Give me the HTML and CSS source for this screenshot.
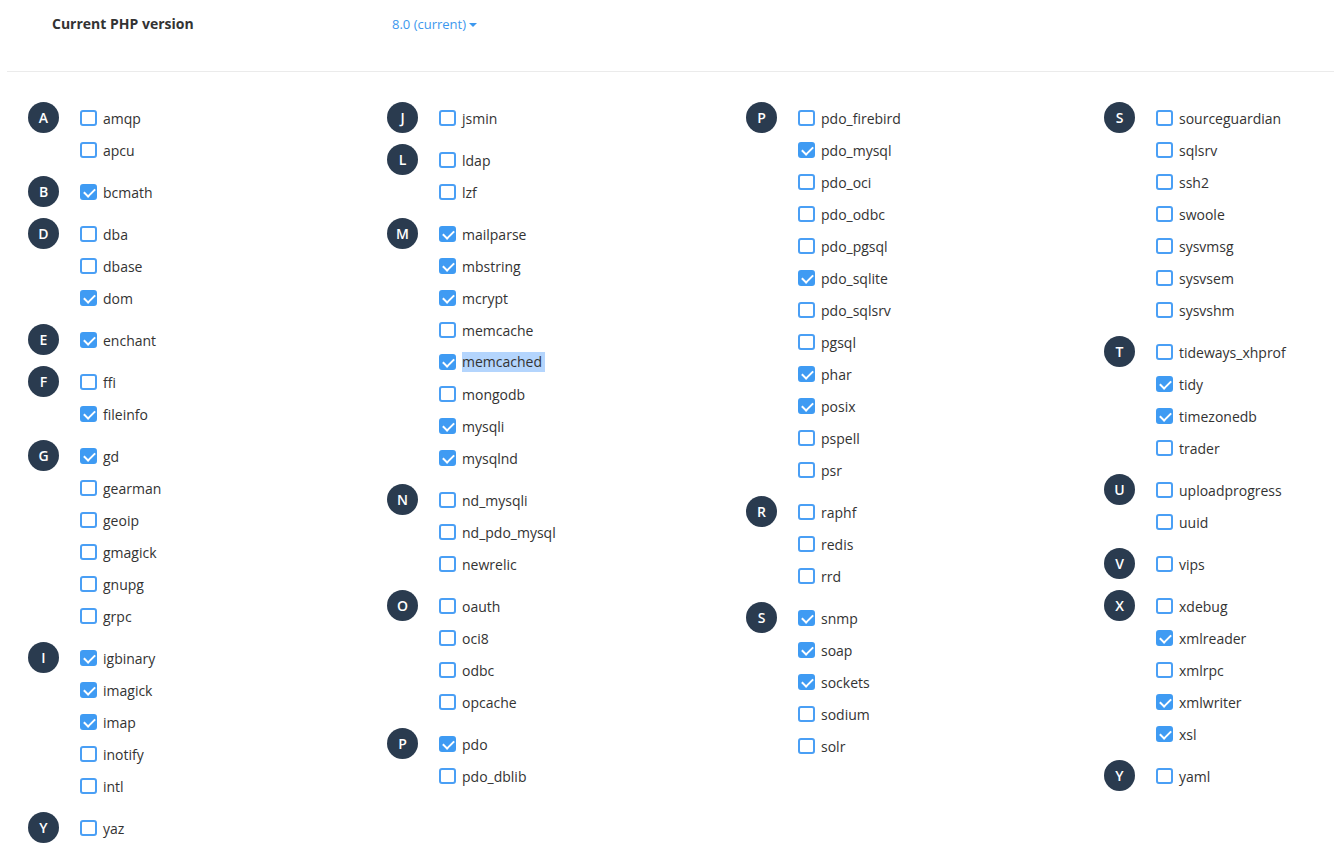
FILE: index.html
```html
<!DOCTYPE html>
<html>
<head>
<meta name="viewport" content="width=device-width, initial-scale=1">
<link rel="stylesheet" href="styles.css">
</head>
<body>

<div class="topbar">
  <span class="topLabel">Current PHP version</span>
  <span class="version">8.0 (current)<span class="caret"></span></span>
</div>

<div class="extensions">
  <div class="column">
    <div class="group"><span class="badge">A</span><ul>
      <li><span class="box"></span>amqp</li>
      <li><span class="box"></span>apcu</li>
    </ul></div>
    <div class="group"><span class="badge">B</span><ul>
      <li><span class="box on"></span>bcmath</li>
    </ul></div>
    <div class="group"><span class="badge">D</span><ul>
      <li><span class="box"></span>dba</li>
      <li><span class="box"></span>dbase</li>
      <li><span class="box on"></span>dom</li>
    </ul></div>
    <div class="group"><span class="badge">E</span><ul>
      <li><span class="box on"></span>enchant</li>
    </ul></div>
    <div class="group"><span class="badge">F</span><ul>
      <li><span class="box"></span>ffi</li>
      <li><span class="box on"></span>fileinfo</li>
    </ul></div>
    <div class="group"><span class="badge">G</span><ul>
      <li><span class="box on"></span>gd</li>
      <li><span class="box"></span>gearman</li>
      <li><span class="box"></span>geoip</li>
      <li><span class="box"></span>gmagick</li>
      <li><span class="box"></span>gnupg</li>
      <li><span class="box"></span>grpc</li>
    </ul></div>
    <div class="group"><span class="badge">I</span><ul>
      <li><span class="box on"></span>igbinary</li>
      <li><span class="box on"></span>imagick</li>
      <li><span class="box on"></span>imap</li>
      <li><span class="box"></span>inotify</li>
      <li><span class="box"></span>intl</li>
    </ul></div>
    <div class="group"><span class="badge">Y</span><ul>
      <li><span class="box"></span>yaz</li>
    </ul></div>
  </div>

  <div class="column">
    <div class="group"><span class="badge">J</span><ul>
      <li><span class="box"></span>jsmin</li>
    </ul></div>
    <div class="group"><span class="badge">L</span><ul>
      <li><span class="box"></span>ldap</li>
      <li><span class="box"></span>lzf</li>
    </ul></div>
    <div class="group"><span class="badge">M</span><ul>
      <li><span class="box on"></span>mailparse</li>
      <li><span class="box on"></span>mbstring</li>
      <li><span class="box on"></span>mcrypt</li>
      <li><span class="box"></span>memcache</li>
      <li><span class="box on"></span><span class="selected">memcached</span></li>
      <li><span class="box"></span>mongodb</li>
      <li><span class="box on"></span>mysqli</li>
      <li><span class="box on"></span>mysqlnd</li>
    </ul></div>
    <div class="group"><span class="badge">N</span><ul>
      <li><span class="box"></span>nd_mysqli</li>
      <li><span class="box"></span>nd_pdo_mysql</li>
      <li><span class="box"></span>newrelic</li>
    </ul></div>
    <div class="group"><span class="badge">O</span><ul>
      <li><span class="box"></span>oauth</li>
      <li><span class="box"></span>oci8</li>
      <li><span class="box"></span>odbc</li>
      <li><span class="box"></span>opcache</li>
    </ul></div>
    <div class="group"><span class="badge">P</span><ul>
      <li><span class="box on"></span>pdo</li>
      <li><span class="box"></span>pdo_dblib</li>
    </ul></div>
  </div>

  <div class="column">
    <div class="group"><span class="badge">P</span><ul>
      <li><span class="box"></span>pdo_firebird</li>
      <li><span class="box on"></span>pdo_mysql</li>
      <li><span class="box"></span>pdo_oci</li>
      <li><span class="box"></span>pdo_odbc</li>
      <li><span class="box"></span>pdo_pgsql</li>
      <li><span class="box on"></span>pdo_sqlite</li>
      <li><span class="box"></span>pdo_sqlsrv</li>
      <li><span class="box"></span>pgsql</li>
      <li><span class="box on"></span>phar</li>
      <li><span class="box on"></span>posix</li>
      <li><span class="box"></span>pspell</li>
      <li><span class="box"></span>psr</li>
    </ul></div>
    <div class="group"><span class="badge">R</span><ul>
      <li><span class="box"></span>raphf</li>
      <li><span class="box"></span>redis</li>
      <li><span class="box"></span>rrd</li>
    </ul></div>
    <div class="group"><span class="badge">S</span><ul>
      <li><span class="box on"></span>snmp</li>
      <li><span class="box on"></span>soap</li>
      <li><span class="box on"></span>sockets</li>
      <li><span class="box"></span>sodium</li>
      <li><span class="box"></span>solr</li>
    </ul></div>
  </div>

  <div class="column">
    <div class="group"><span class="badge">S</span><ul>
      <li><span class="box"></span>sourceguardian</li>
      <li><span class="box"></span>sqlsrv</li>
      <li><span class="box"></span>ssh2</li>
      <li><span class="box"></span>swoole</li>
      <li><span class="box"></span>sysvmsg</li>
      <li><span class="box"></span>sysvsem</li>
      <li><span class="box"></span>sysvshm</li>
    </ul></div>
    <div class="group"><span class="badge">T</span><ul>
      <li><span class="box"></span>tideways_xhprof</li>
      <li><span class="box on"></span>tidy</li>
      <li><span class="box on"></span>timezonedb</li>
      <li><span class="box"></span>trader</li>
    </ul></div>
    <div class="group"><span class="badge">U</span><ul>
      <li><span class="box"></span>uploadprogress</li>
      <li><span class="box"></span>uuid</li>
    </ul></div>
    <div class="group"><span class="badge">V</span><ul>
      <li><span class="box"></span>vips</li>
    </ul></div>
    <div class="group"><span class="badge">X</span><ul>
      <li><span class="box"></span>xdebug</li>
      <li><span class="box on"></span>xmlreader</li>
      <li><span class="box"></span>xmlrpc</li>
      <li><span class="box on"></span>xmlwriter</li>
      <li><span class="box on"></span>xsl</li>
    </ul></div>
    <div class="group"><span class="badge">Y</span><ul>
      <li><span class="box"></span>yaml</li>
    </ul></div>
  </div>
</div>

</body>
</html>
```

FILE: styles.css
```css
body {
  margin: 0;
  background: #fff;
  color: #333;
}

* {
  box-sizing: border-box;
  font-family: 'Open Sans', 'Liberation Sans', sans-serif;
}

/* Header row with the PHP version */
.topbar {
  display: flex;
  align-items: center;
  height: 72px;
  margin-left: 7px;
  padding: 0 0 24px 45px;
  border-bottom: 1px solid #ebebeb;
}

.topLabel {
  width: 340px;
  font-size: 14px;
  font-weight: 700;
  color: #333;
}

.version {
  font-size: 13px;
  color: #3d98ee;
  cursor: pointer;
}

.caret {
  display: inline-block;
  margin-left: 3px;
  vertical-align: middle;
  border-left: 4px solid transparent;
  border-right: 4px solid transparent;
  border-top: 4px solid #3d98ee;
}

/* Extension grid */
.extensions {
  display: grid;
  grid-template-columns: 359px 359px 358px minmax(0, 1fr);
  padding: 30px 0 0 28px;
}

.column {
  display: flex;
  flex-direction: column;
  gap: 10px;
}

.group {
  display: flex;
  align-items: flex-start;
}

.badge {
  flex: none;
  width: 31px;
  height: 31px;
  margin: 0 21px 0 0;
  border-radius: 50%;
  background: #2a3b4f;
  color: #fff;
  font-size: 14px;
  font-weight: 600;
  line-height: 31px;
  text-align: center;
}

ul {
  margin: 0;
  padding: 0;
  list-style: none;
}

ul li {
  display: flex;
  align-items: center;
  height: 32px;
  font-size: 14px;
  color: #333;
  white-space: nowrap;
}

/* Checkboxes */
.box {
  position: relative;
  flex: none;
  width: 17px;
  height: 16px;
  margin-right: 6px;
  border: 2px solid #4a9ff5;
  border-radius: 3px;
  background: #fff;
}

.box.on {
  background: #3f9bf3;
  border-color: #3f9bf3;
}

.box.on::after {
  content: '';
  position: absolute;
  left: 3.5px;
  top: 0;
  width: 5px;
  height: 9px;
  border: solid #fff;
  border-width: 0 2px 2px 0;
  transform: rotate(45deg);
}

.selected {
  background: #b4d5fd;
  line-height: 20px;
  padding-right: 3px;
}
```
